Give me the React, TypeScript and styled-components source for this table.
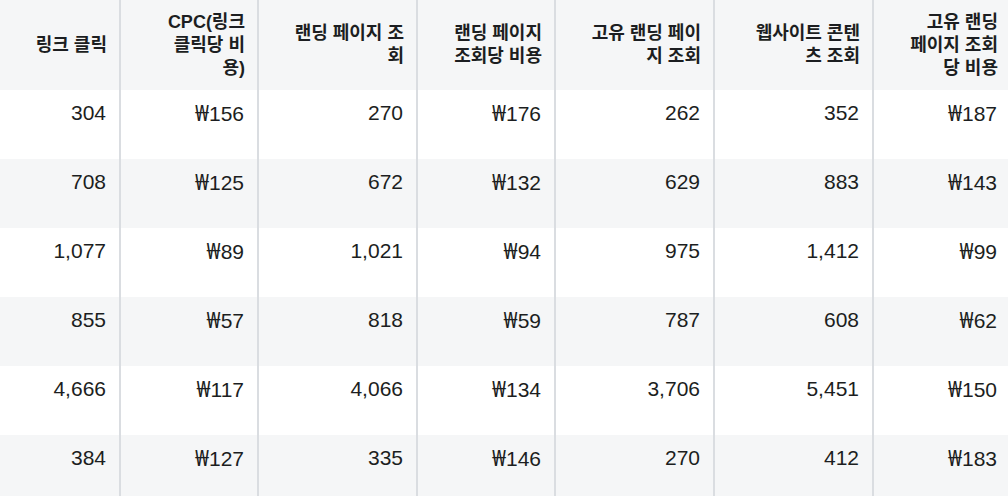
import styled, { createGlobalStyle } from 'styled-components'

const GlobalStyle = createGlobalStyle`
  html, body {
    margin: 0;
    padding: 0;
    background: #ffffff;
    overflow: hidden;
  }
  body {
    font-family: "Liberation Sans", "Noto Sans CJK KR", sans-serif;
    color: #1c1e21;
  }
`

interface Column {
  label: string
  width: number
}

const columns: Column[] = [
  { label: '링크 클릭', width: 120 },
  { label: 'CPC(링크 클릭당 비용)', width: 138 },
  { label: '랜딩 페이지 조회', width: 159 },
  { label: '랜딩 페이지 조회당 비용', width: 138 },
  { label: '고유 랜딩 페이지 조회', width: 159 },
  { label: '웹사이트 콘텐츠 조회', width: 159 },
  { label: '고유 랜딩 페이지 조회당 비용', width: 138 },
]

const rows: string[][] = [
  ['304', '₩156', '270', '₩176', '262', '352', '₩187'],
  ['708', '₩125', '672', '₩132', '629', '883', '₩143'],
  ['1,077', '₩89', '1,021', '₩94', '975', '1,412', '₩99'],
  ['855', '₩57', '818', '₩59', '787', '608', '₩62'],
  ['4,666', '₩117', '4,066', '₩134', '3,706', '5,451', '₩150'],
  ['384', '₩127', '335', '₩146', '270', '412', '₩183'],
]

const Value = ({ text }: { text: string }) =>
  text.startsWith('₩') ? (
    <>
      <Won>₩</Won>
      {text.slice(1)}
    </>
  ) : (
    <>{text}</>
  )

export default function App() {
  return (
    <>
      <GlobalStyle />
      <Table>
        <colgroup>
          {columns.map((c) => (
            <col key={c.label} style={{ width: c.width }} />
          ))}
        </colgroup>
        <thead>
          <tr>
            {columns.map((c) => (
              <HeaderCell key={c.label}>{c.label}</HeaderCell>
            ))}
          </tr>
        </thead>
        <tbody>
          {rows.map((row, i) => (
            <Row key={i} striped={i % 2 === 1}>
              {row.map((value, j) => (
                <Cell key={j}>
                  <Value text={value} />
                </Cell>
              ))}
            </Row>
          ))}
        </tbody>
      </Table>
    </>
  )
}

const Table = styled.table`
  table-layout: fixed;
  width: 1011px;
  border-collapse: collapse;
  border-spacing: 0;
`

const HeaderCell = styled.th`
  height: 90px;
  box-sizing: border-box;
  padding: 0 12px 0 35px;
  background: #f5f6f7;
  border-right: 2px solid #dadde1;
  text-align: right;
  vertical-align: middle;
  font-size: 18px;
  line-height: 23px;
  font-weight: 700;
  color: #1c1e21;
`

const Row = styled.tr<{ striped: boolean }>`
  background: ${({ striped }) => (striped ? '#f5f6f7' : '#ffffff')};
`

const Cell = styled.td`
  height: 69px;
  box-sizing: border-box;
  padding: 12px 13px 0;
  border-right: 2px solid #dadde1;
  text-align: right;
  vertical-align: top;
  font-size: 21px;
  line-height: 22px;
  color: #1c1e21;
`

const Won = styled.span`
  font-family: "Noto Sans", "DejaVu Sans", sans-serif;
  font-weight: 400;
`
